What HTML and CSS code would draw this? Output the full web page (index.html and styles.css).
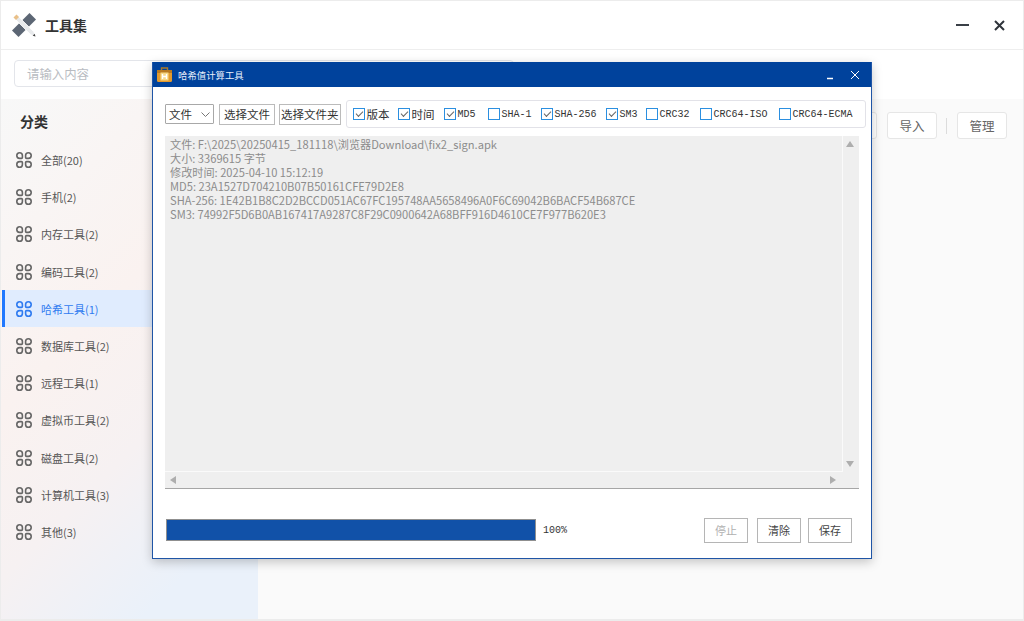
FILE: index.html
```html
<!DOCTYPE html>
<html lang="zh-CN">
<head>
<meta charset="utf-8">
<title>工具集</title>
<link rel="stylesheet" href="styles.css">
</head>
<body>
<div class="app">
  <header class="top">
    <div class="brand">
      <svg class="logo" width="24" height="24" viewBox="0 0 24 24">
        <path d="M0 17.500 17.500 0 24 6.500 6.500 24z" fill="#5c6674"/>
        <path d="M1.500 4.500 4.500 1.500 21.800 18.800 23.500 23.500 18.800 21.800z" fill="#e8eaec" stroke="#fff" stroke-width=".8"/>
        <path d="M1.500 4.500 4.500 1.500 7 4 4 7z" fill="#e9c088"/>
        <path d="M20.700 22.700 22.700 20.700 23.500 23.500z" fill="#444"/>
      </svg>
      <span class="brand-name">工具集</span>
    </div>
    <div class="win-btns">
      <svg width="13" height="12" viewBox="0 0 13 12"><path d="M0 6h13" stroke="#3a3f47" stroke-width="2"/></svg>
      <svg width="11" height="11" viewBox="0 0 11 11"><path d="M1 1l9 9M10 1 1 10" stroke="#2f343b" stroke-width="2"/></svg>
    </div>
  </header>
  <div class="searchbar"><div class="search">请输入内容</div></div>
  <div class="main">
    <aside class="side">
      <h2 class="side-title">分类</h2>
      <nav class="menu">
        <a class="item"><svg class="ico"><use href="#g"/></svg>全部(20)</a>
        <a class="item"><svg class="ico"><use href="#g"/></svg>手机(2)</a>
        <a class="item"><svg class="ico"><use href="#g"/></svg>内存工具(2)</a>
        <a class="item"><svg class="ico"><use href="#g"/></svg>编码工具(2)</a>
        <a class="item on"><svg class="ico"><use href="#g"/></svg>哈希工具(1)</a>
        <a class="item"><svg class="ico"><use href="#g"/></svg>数据库工具(2)</a>
        <a class="item"><svg class="ico"><use href="#g"/></svg>远程工具(1)</a>
        <a class="item"><svg class="ico"><use href="#g"/></svg>虚拟币工具(2)</a>
        <a class="item"><svg class="ico"><use href="#g"/></svg>磁盘工具(2)</a>
        <a class="item"><svg class="ico"><use href="#g"/></svg>计算机工具(3)</a>
        <a class="item"><svg class="ico"><use href="#g"/></svg>其他(3)</a>
      </nav>
    </aside>
    <section class="content">
      <div class="actions">
        <span class="act"></span>
        <span class="act">导入</span>
        <span class="sep"></span>
        <span class="act">管理</span>
      </div>
    </section>
  </div>
</div>

<div class="dialog">
  <div class="dlg-title">
    <svg class="dlg-logo" width="15" height="15" viewBox="0 0 15 15">
      <path d="M4.500 3V1h6v2" fill="none" stroke="#a97a2a" stroke-width="1.400"/>
      <rect x="0" y="3" width="15" height="12" rx="1.500" fill="#e39a2e"/>
      <rect x="0" y="3" width="15" height="3" fill="#b97a22"/>
      <rect x="3.500" y="5.500" width="8" height="8" fill="#f7d98a"/>
      <path d="M5.500 7v5M9.500 7v5M5.500 9.500h4" stroke="#fff" stroke-width="1.400"/>
    </svg>
    <span class="dlg-name">哈希值计算工具</span>
    <svg class="dlg-ctl" width="12" height="12" viewBox="0 0 12 12"><path d="M2 9.500h6" stroke="#fff" stroke-width="1.500"/></svg>
    <svg class="dlg-ctl" width="12" height="12" viewBox="0 0 12 12"><path d="M2 2l8 8M10 2l-8 8" stroke="#fff" stroke-width="1"/></svg>
  </div>
  <div class="dlg-body">
    <div class="toolbar">
      <div class="select">文件<svg width="9" height="5" viewBox="0 0 9 5"><path d="M.5.500 4.500 4.500 8.500.500" fill="none" stroke="#777"/></svg></div>
      <span class="tbtn">选择文件</span>
      <span class="tbtn tight">选择文件夹</span>
      <div class="checks">
        <label class="chk cjk"><span class="box on"></span>版本</label>
        <label class="chk cjk"><span class="box on"></span>时间</label>
        <label class="chk"><span class="box on"></span>MD5</label>
        <label class="chk"><span class="box"></span>SHA-1</label>
        <label class="chk"><span class="box on"></span>SHA-256</label>
        <label class="chk"><span class="box on"></span>SM3</label>
        <label class="chk"><span class="box"></span>CRC32</label>
        <label class="chk"><span class="box"></span>CRC64-ISO</label>
        <label class="chk"><span class="box"></span>CRC64-ECMA</label>
      </div>
    </div>
    <div class="output">
      <div class="out-row">
        <div class="text">文件: F:\2025\20250415_181118\浏览器Download\fix2_sign.apk
大小: 3369615 字节
修改时间: 2025-04-10 15:12:19
MD5: 23A1527D704210B07B50161CFE79D2E8
SHA-256: 1E42B1B8C2D2BCCD051AC67FC195748AA5658496A0F6C69042B6BACF54B687CE
SM3: 74992F5D6B0AB167417A9287C8F29C0900642A68BFF916D4610CE7F977B620E3</div>
        <div class="vbar"><i class="arr up"></i><i class="arr down"></i></div>
      </div>
      <div class="hbar"><i class="arr left"></i><i class="arr right"></i></div>
    </div>
    <div class="foot">
      <div class="progress"></div>
      <span class="pct">100%</span>
      <span class="fbtn off">停止</span>
      <span class="fbtn">清除</span>
      <span class="fbtn">保存</span>
    </div>
  </div>
</div>

<svg class="defs" width="0" height="0">
  <symbol id="g" viewBox="0 0 16 16">
    <g fill="none" stroke="currentColor" stroke-width="1.600">
      <path d="M3.600.8a2.800 2.800 0 0 1 2.800 2.800v1.800a1 1 0 0 1-1 1H3.600a2.800 2.800 0 0 1 0-5.600z"/>
      <path transform="matrix(-1 0 0 1 16 0)" d="M3.600.8a2.800 2.800 0 0 1 2.800 2.800v1.800a1 1 0 0 1-1 1H3.600a2.800 2.800 0 0 1 0-5.600z"/>
      <path transform="matrix(1 0 0 -1 0 16)" d="M3.600.8a2.800 2.800 0 0 1 2.800 2.800v1.800a1 1 0 0 1-1 1H3.600a2.800 2.800 0 0 1 0-5.600z"/>
      <path transform="matrix(-1 0 0 -1 16 16)" d="M3.600.8a2.800 2.800 0 0 1 2.800 2.800v1.800a1 1 0 0 1-1 1H3.600a2.800 2.800 0 0 1 0-5.600z"/>
    </g>
  </symbol>
</svg>
</body>
</html>
```
FILE: styles.css
```css
* { box-sizing: border-box; }
html, body { margin: 0; height: 100%; }
body {
  width: 1024px; height: 621px; overflow: hidden; position: relative;
  font-family: "Noto Sans CJK SC", "Noto Sans", sans-serif;
  background: #fafafa; color: #333;
}
.app { height: 621px; border: 1px solid #ececec; border-width: 1px 1px 2px 1px; display: flex; flex-direction: column; }
.top { height: 49px; background: #fff; border-bottom: 1px solid #eeeeee; display: flex; align-items: center; justify-content: space-between; padding: 0 18px 0 11px; flex: none; }
.brand { display: flex; align-items: center; gap: 9px; }
.brand-name { font-size: 14px; font-weight: 700; color: #333; }
.win-btns { display: flex; gap: 25px; align-items: center; }
.searchbar { height: 49px; background: #fff; padding: 10px 13px; flex: none; }
.search { width: 500px; height: 27px; border: 1px solid #e3e5ea; border-radius: 4px; font-size: 12.4px; line-height: 26px; color: #b9bcc2; padding-left: 12px; }
.main { flex: 1; display: flex; min-height: 0; }
.side { width: 257px; background: linear-gradient(135deg, #f8f8f8 0%, #faf2f0 40%, #f6f1f2 62%, #eaf1fa 85%); flex: none; padding: 10px 0 0 1px; }
.side-title { font-size: 14px; font-weight: 700; margin: 0 0 0 18px; height: 24px; line-height: 24px; color: #333; }
.menu { margin-top: 8.5px; display: flex; flex-direction: column; }
.item { height: 37.2px; display: flex; align-items: center; gap: 9px; padding-left: 14px; font-size: 11px; color: #555; }
.ico { width: 16px; height: 16px; color: #666; flex: none; }
.item.on { background: #e0ecfe; color: #2f7bf0; border-left: 3px solid #1f78ff; padding-left: 11px; }
.item.on .ico { color: #2f7bf0; }
.content { flex: 1; padding: 13px 16px 0 0; }
.actions { display: flex; justify-content: flex-end; align-items: center; gap: 10px; }
.act { width: 50px; height: 27px; background: #fff; border: 1px solid #e6e6e6; border-radius: 3px; font-size: 12.5px; line-height: 25px; text-align: center; color: #666; }
.sep { width: 1px; height: 16px; background: #dcdcdc; margin-left: -1px; }
.defs { position: absolute; }
.dialog { position: absolute; left: 152px; top: 62px; width: 720px; height: 497px; background: #fff; border: 1px solid #1f55a6; border-top: 0; box-shadow: 0 3px 10px rgba(0,0,0,.22); display: flex; flex-direction: column; }
.dlg-title { height: 25px; background: #00429c; display: flex; align-items: center; color: #fff; padding: 0 10px 0 4px; flex: none; }
.dlg-logo { flex: none; }
.dlg-name { flex: 1; font-size: 9.4px; margin-left: 6px; color: #e8eefa; }
.dlg-ctl { margin-left: 12px; }
.dlg-body { flex: 1; display: flex; flex-direction: column; padding: 13px 4px 0 12px; min-height: 0; }
.toolbar { display: flex; align-items: center; height: 28px; flex: none; }
.select { flex: none; width: 49px; height: 20px; border: 1px solid #a8a8a8; border-radius: 1px; font-size: 11.5px; line-height: 17px; padding-left: 3px; color: #333; display: flex; align-items: center; justify-content: space-between; padding-right: 3px; }
.tbtn { flex: none; white-space: nowrap; margin-left: 5px; height: 21px; border: 1px solid #bbb; font-size: 11.5px; line-height: 19px; padding: 0 4px; color: #333; }
.tbtn.tight { margin-left: 4px; padding: 0 1px; }
.checks { flex: none; margin-left: 5px; height: 28px; width: 520px; border: 1px solid #e2e2e8; border-radius: 3px; display: grid; grid-template-columns: 45px 46px 44px 53px 65px 40px 54px 79px auto; align-items: center; padding-left: 6px; font-family: "Liberation Mono", "Noto Sans CJK SC", monospace; font-size: 10px; color: #333; }
.chk { display: flex; align-items: center; gap: 2px; white-space: nowrap; }
.chk.cjk { font-family: "Noto Sans CJK SC", sans-serif; font-size: 11.5px; }
.box { width: 12px; height: 12px; border: 1px solid #2b8fe0; display: block; position: relative; flex: none; }
.box.on::after { content: ""; position: absolute; left: 2px; top: 1.5px; width: 6px; height: 3px; border: solid #666; border-width: 0 0 1px 1px; transform: rotate(-45deg); }
.output { margin: 8px 8px 0 0; height: 353px; background: #efefef; border-bottom: 1px solid #a6a6a6; flex: none; display: flex; flex-direction: column; }
.out-row { flex: 1; display: flex; min-height: 0; }
.text { flex: 1; white-space: pre; font-size: 11.15px; line-height: 14px; color: #8c8c8c; padding: 1px 5px; border-right: 1px solid #fafafa; border-bottom: 1px solid #fafafa; }
.vbar { width: 16px; position: relative; flex: none; }
.hbar { height: 16px; position: relative; flex: none; }
.arr { position: absolute; width: 0; height: 0; border: 4px solid transparent; }
.arr.up { top: 5px; left: 3px; border-bottom: 6px solid #aeaeae; border-top-width: 0; }
.arr.down { bottom: 5px; left: 3px; border-top: 6px solid #aeaeae; border-bottom-width: 0; }
.arr.left { left: 5px; top: 4px; border-right: 6px solid #aeaeae; border-left-width: 0; }
.arr.right { right: 23px; top: 4px; border-left: 6px solid #aeaeae; border-right-width: 0; }
.foot { flex: 1; display: flex; align-items: center; padding: 13px 15px 0 1px; }
.progress { flex: none; width: 370px; height: 22px; background: #1151a8; border: 1px solid #8f8f8f; }
.pct { margin-left: 7px; flex: 1; font-family: "Liberation Mono", monospace; font-size: 10px; color: #333; }
.fbtn { width: 44px; height: 25px; border: 1px solid #b5b5b5; font-size: 11px; line-height: 23px; text-align: center; color: #444; margin-left: 7px; }
.fbtn.off { color: #b0b0b0; margin-right: 2px; }
```
